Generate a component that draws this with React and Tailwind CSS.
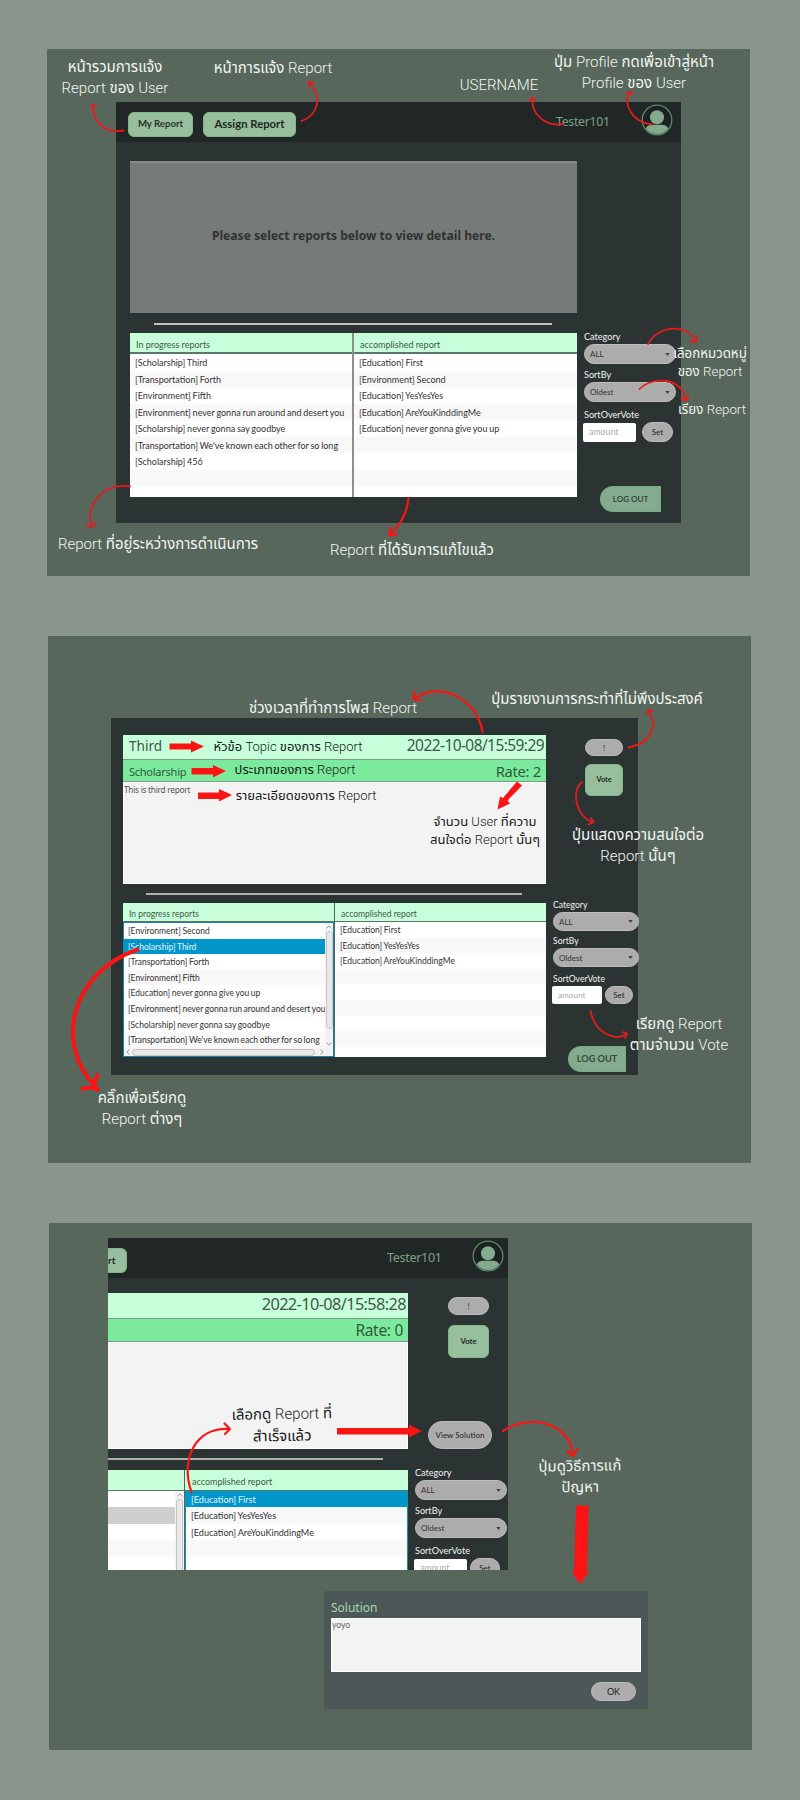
import React from 'react';

const thai = "font-['Roboto','Noto_Sans_Thai','Noto_Sans',sans-serif]";

function ActionButton({ className, children }) {
  return (
    <button className={`flex shrink-0 items-center justify-center whitespace-nowrap font-['Lato',sans-serif] ${className}`}>
      {children}
    </button>
  );
}

function Avatar({ className }) {
  return (
    <svg viewBox="0 0 32 32" className={`h-8 w-8 shrink-0 ${className}`}>
      <circle cx="16" cy="16" r="14.8" fill="#1c2121" stroke="#5f8a6c" strokeWidth="1.3" />
      <circle cx="16" cy="13.2" r="7" fill="#84ab8d" />
      <path d="M4.7 24.2 Q7 20.8 11 20.8 H21 Q25 20.8 27.3 24.2 A14 14 0 0 1 4.7 24.2Z" fill="#84ab8d" />
    </svg>
  );
}

function Select({ className, children }) {
  return (
    <div className={`flex shrink-0 items-center justify-between rounded-full border border-[#bcbcbc] bg-[#acacac] pr-[5px] pl-[5px] font-['Lato',sans-serif] text-[8px] text-[#333] ${className}`}>
      <span>{children}</span>
      <svg viewBox="0 0 6 4" className="h-[3px] w-[5px]"><path d="M0 0H6L3 4Z" fill="#444" /></svg>
    </div>
  );
}

function FieldLabel({ className, children }) {
  return (
    <div className={`flex shrink-0 items-end font-['Lato',sans-serif] leading-[14px] text-[#f0f3f1] ${className}`}>{children}</div>
  );
}

function Row({ className, children }) {
  return (
    <li className={`shrink-0 overflow-hidden whitespace-nowrap font-['Lato',sans-serif] [word-spacing:-0.55px] ${className}`}>{children}</li>
  );
}

const stripe = ['bg-white', 'bg-[#f8f8f8]'];

function Filters({ small, clipped }) {
  const sel = small ? 'h-[19px] w-[86px]' : 'h-5 w-[92px]';
  const label = small ? 'text-[8.6px]' : 'text-[9.1px]';
  return (
    <div className="flex flex-col">
      <FieldLabel className={`h-[14px] pl-px ${label}`}>Category</FieldLabel>
      <Select className={`ml-px ${sel}`}>ALL</Select>
      <FieldLabel className={`${small ? 'h-[17px]' : 'h-[18px]'} pl-px ${label}`}>SortBy</FieldLabel>
      <Select className={`ml-px ${sel}`}>Oldest</Select>
      <FieldLabel className={`${small ? 'h-[19px]' : 'h-[20px]'} pl-px ${label}`}>SortOverVote</FieldLabel>
      <div className="flex items-center">
        <div className={`flex items-center rounded-[2px] bg-white pl-[6px] font-['Lato',sans-serif] text-[#aaa] ${small ? 'h-[18px] w-[50px] text-[8.2px]' : 'h-[19px] w-[53px] text-[8.8px]'}`}>amount</div>
        <ActionButton className={`rounded-full border border-[#bcbcbc] bg-[#acacac] text-[8px] text-[#222] ${small ? 'ml-[3px] h-[18px] w-[28px]' : clipped ? 'ml-[3px] h-5 w-[30px]' : 'ml-[6px] h-5 w-[31px]'}`}>Set</ActionButton>
      </div>
    </div>
  );
}

function ReportsWindow() {
  const left = ['[Scholarship] Third', '[Transportation] Forth', '[Environment] Fifth', '[Environment] never gonna run around and desert you', '[Scholarship] never gonna say goodbye', "[Transportation] We've known each other for so long", '[Scholarship] 456', '', ''];
  const right = ['[Education] First', '[Environment] Second', '[Education] YesYesYes', '[Education] AreYouKinddingMe', '[Education] never gonna give you up', '', '', '', ''];
  return (
    <div className="flex h-[421px] w-[565px] flex-col bg-[#2c3433]">
      <header className="flex h-[40px] shrink-0 items-center bg-[#212626] pl-3">
        <ActionButton className="mt-[4px] h-[25px] w-[65px] rounded-[6px] border border-[#83b78b] bg-[#98bf9d] text-[9.6px] font-bold text-[#24352a]">My Report</ActionButton>
        <ActionButton className="mt-[4px] ml-[10px] h-[25px] w-[93px] rounded-[6px] border border-[#83b78b] bg-[#98bf9d] text-[11.3px] font-bold text-[#1c2a1f]">Assign Report</ActionButton>
        <span className="ml-auto w-[55px] font-['Noto_Sans',sans-serif] text-[12.3px] tracking-[-0.3px] whitespace-nowrap text-[#7ba286]">Tester101</span>
        <Avatar className="mr-[8px] ml-[30px] -mt-[5px]" />
      </header>
      <div className="flex pl-[14px]">
        <main className="flex w-[447px] flex-col pt-[19px]">
          <div className="flex h-[152px] items-center justify-center border-t-2 border-[#868a89] bg-[#767a79] font-['Noto_Sans',sans-serif] text-[12.1px] font-bold text-[#303232]">
            <span className="-mt-[4px] whitespace-nowrap">Please select reports below to view detail here.</span>
          </div>
          <div className="mt-[10px] ml-[24px] h-[2px] w-[398px] bg-[#bfc2c1]" />
          <div className="mt-[8px] flex h-[164px] overflow-hidden bg-[#8c8f8e]">
            <ListColumn title="In progress reports" rows={left} className="w-[222px]" />
            <ListColumn title="accomplished report" rows={right} className="ml-[2px] w-[223px]" />
          </div>
        </main>
        <aside className="flex flex-col pt-[188px] pl-[6px]">
          <Filters />
          <ActionButton className="mt-[44px] ml-[17px] h-[26px] w-[61px] rounded-l-full rounded-r-[3px] border border-[#75ab81] bg-[#84ab8d] text-[8px] font-bold text-[#34493b]">LOG OUT</ActionButton>
        </aside>
      </div>
    </div>
  );
}

function ListColumn({ title, rows, className }) {
  return (
    <section className={`flex shrink-0 flex-col bg-white ${className}`}>
      <h3 className="flex h-[21px] shrink-0 items-center border-b-2 border-[#5d7667] bg-[#c8ffdb] pt-[4px] pl-[6px] font-['Lato',sans-serif] text-[9px] text-[#3d5a49]">{title}</h3>
      <ul className="flex flex-col">
        {rows.map((r, i) => (
          <Row key={i} className={`h-[16.5px] pl-[5px] text-[9px] leading-[17.5px] text-[#333] ${stripe[i % 2]}`}>{r}</Row>
        ))}
      </ul>
    </section>
  );
}

function Chevron({ className }) {
  return (
    <svg viewBox="0 0 6 4" className={`h-[4px] w-[6px] shrink-0 ${className}`}>
      <path d="M0.5 3.4L3 0.8L5.5 3.4" fill="none" stroke="#999" strokeWidth="1" />
    </svg>
  );
}

function DetailWindow() {
  const left = ['[Environment] Second', '[Scholarship] Third', '[Transportation] Forth', '[Environment] Fifth', '[Education] never gonna give you up', '[Environment] never gonna run around and desert you', '[Scholarship] never gonna say goodbye', '[Transportation] We\'ve known each other for so long'];
  const right = ['[Education] First', '[Education] YesYesYes', '[Education] AreYouKinddingMe', '', '', '', '', '', ''];
  return (
    <div className="flex h-[357px] w-[527px] overflow-visible bg-[#2c3433] pl-[12px]">
      <main className="flex w-[423px] shrink-0 flex-col pt-[17px] font-['Noto_Sans',sans-serif]">
        <div className="flex h-[25px] justify-between border-b border-[#7d9b88] bg-[#c8ffdb] pr-[2px] pl-[6px] leading-[21px] text-[#3f5748]">
          <span className="text-[13.6px]">Third</span>
          <span className="text-[15.5px] tracking-[-0.58px]">2022-10-08/15:59:29</span>
        </div>
        <div className="flex h-[22px] justify-between border-b border-[#7d9b88] bg-[#7cea9c] pr-[5px] pl-[6px] text-[#2f5a3d]">
          <span className="text-[11px] leading-[23px] tracking-[-0.25px]">Scholarship</span>
          <span className="text-[14.8px] leading-[22px] tracking-[-0.3px]">Rate: 2</span>
        </div>
        <div className="h-[102px] border border-white bg-[#f3f3f3] text-[8.3px] leading-[13px] tracking-[-0.27px] text-[#555]">This is third report</div>
        <div className="mt-[9px] ml-[23px] h-[2px] w-[376px] shrink-0 bg-[#aeb1b0]" />
        <div className="mt-[8px] flex h-[154px] shrink-0 bg-[#5b6360]">
          <section className="flex w-[211px] flex-col">
            <h3 className="flex h-[19px] shrink-0 items-center border-b border-[#5d7667] bg-[#c8ffdb] pt-[4px] pl-[6px] font-['Lato',sans-serif] text-[8.5px] text-[#3d5a49]">In progress reports</h3>
            <div className="flex flex-1 flex-col border border-[#1784ab] bg-[#f2f2f2]">
              <div className="flex h-[125px] shrink-0">
                <ul className="flex w-[201px] flex-col overflow-hidden">
                  {left.map((r, i) => (
                    <Row key={i} className={`h-[15.6px] pl-[4px] text-[8.5px] leading-[16px] ${i === 1 ? 'bg-[#0096c9] text-[#e2f3f9]' : `text-[#333] ${stripe[i % 2]}`}`}>{r}</Row>
                  ))}
                </ul>
                <div className="flex flex-1 flex-col items-center pt-[2px] pb-[2px]">
                  <Chevron />
                  <div className="mt-[2px] h-[98px] w-[7px] rounded-full border border-[#c4c4c4] bg-[#e8e8e8]" />
                  <Chevron className="mt-auto rotate-180" />
                </div>
              </div>
              <div className="flex flex-1 items-center pl-px">
                <Chevron className="-rotate-90" />
                <div className="ml-px h-[7px] w-[183px] rounded-full border border-[#c4c4c4] bg-[#e8e8e8]" />
                <Chevron className="ml-[4px] rotate-90" />
              </div>
            </div>
          </section>
          <section className="ml-px flex w-[211px] flex-col overflow-hidden bg-white">
            <h3 className="flex h-[19px] shrink-0 items-center border-b border-[#5d7667] bg-[#c8ffdb] pt-[4px] pl-[6px] font-['Lato',sans-serif] text-[8.5px] text-[#3d5a49]">accomplished report</h3>
            <ul className="flex flex-col">
              {right.map((r, i) => (
                <Row key={i} className={`h-[15.6px] pl-[5px] text-[8.5px] leading-[16.6px] text-[#333] ${stripe[i % 2]}`}>{r}</Row>
              ))}
            </ul>
          </section>
        </div>
      </main>
      <aside className="flex shrink-0 flex-col pt-[21px] pl-[6px]">
        <ActionButton className="ml-[33px] h-[17px] w-[38px] rounded-full border border-[#bcbcbc] bg-[#acacac] text-[8px] text-[#333]">!</ActionButton>
        <ActionButton className="mt-[8px] ml-[33px] h-[32px] w-[38px] rounded-[6px] border border-[#83b78b] bg-[#98bf9d] text-[7.3px] font-bold text-[#1c2a1f]">Vote</ActionButton>
        <div className="mt-[102px]"><Filters small /></div>
        <ActionButton className="mt-[42px] ml-[16px] h-[26px] w-[58px] rounded-l-full rounded-r-[3px] border border-[#75ab81] bg-[#84ab8d] text-[9.2px] font-bold text-[#34493b]">LOG OUT</ActionButton>
      </aside>
    </div>
  );
}

function SolvedWindow() {
  const right = ['[Education] First', '[Education] YesYesYes', '[Education] AreYouKinddingMe', '', ''];
  return (
    <div className="flex h-[332px] w-[400px] flex-col overflow-hidden bg-[#2c3433]">
      <header className="flex h-[40px] shrink-0 items-center bg-[#212626]">
        <ActionButton className="mt-[5px] h-[25px] w-[19px] justify-start! rounded-r-[6px] border border-l-0 border-[#83b78b] bg-[#98bf9d] text-[10px] font-bold text-[#1c2a1f]">rt</ActionButton>
        <span className="ml-auto w-[56px] font-['Noto_Sans',sans-serif] text-[12.5px] tracking-[-0.3px] whitespace-nowrap text-[#7ba286]">Tester101</span>
        <Avatar className="mr-[4px] ml-[29px] -mt-[4px]" />
      </header>
      <div className="flex">
        <main className="flex w-[300px] shrink-0 flex-col pt-[15px] font-['Noto_Sans',sans-serif]">
          <div className="flex h-[26px] justify-end border-b border-[#7d9b88] bg-[#c8ffdb] pr-[2px] text-[16.3px] leading-[23px] tracking-[-0.6px] text-[#3f5748]">2022-10-08/15:58:28</div>
          <div className="flex h-[23px] justify-end border-b border-[#7d9b88] bg-[#7cea9c] pr-[5px] text-[15.5px] leading-[23px] tracking-[-0.3px] text-[#2f5a3d]">Rate: 0</div>
          <div className="h-[107px] border border-l-0 border-white bg-[#f3f3f3]" />
          <div className="mt-[9px] h-[2px] w-[275px] shrink-0 bg-[#aeb1b0]" />
          <div className="mt-[10px] flex h-[100px] shrink-0 bg-[#5b6360]">
            <section className="flex w-[76px] flex-col bg-white">
              <div className="h-[21px] shrink-0 border-b border-[#5d7667] bg-[#c8ffdb]" />
              <div className="flex flex-1">
                <ul className="flex w-[67px] flex-col">
                  {['bg-white', 'bg-[#cfcfcf]', 'bg-white', 'bg-[#f8f8f8]', 'bg-white'].map((c, i) => <Row key={i} className={`h-[16.4px] ${c}`} />)}
                </ul>
                <div className="flex flex-1 flex-col items-center bg-[#f2f2f2] pt-[2px]">
                  <Chevron />
                  <div className="mt-[2px] w-[7px] flex-1 rounded-t-full border border-b-0 border-[#c4c4c4] bg-[#e8e8e8]" />
                </div>
              </div>
            </section>
            <section className="ml-px flex w-[223px] flex-col bg-white">
              <h3 className="flex h-[21px] shrink-0 items-center border-b border-[#5d7667] bg-[#c8ffdb] pt-[4px] pl-[7px] font-['Lato',sans-serif] text-[9px] text-[#3d5a49]">accomplished report</h3>
              <ul className="flex flex-1 flex-col border-x border-[#1590bd]">
                {right.map((r, i) => (
                  <Row key={i} className={`h-[16.4px] pl-[5px] text-[9.1px] leading-[17px] ${i === 0 ? 'bg-[#0096c9] text-[#e2f3f9]' : `text-[#333] ${stripe[i % 2]}`}`}>{r}</Row>
                ))}
              </ul>
            </section>
          </div>
        </main>
        <aside className="flex shrink-0 flex-col pt-[19px] pl-[6px]">
          <ActionButton className="ml-[34px] h-[18px] w-[41px] rounded-full border border-[#bcbcbc] bg-[#acacac] text-[8px] text-[#333]">!</ActionButton>
          <ActionButton className="mt-[10px] ml-[34px] h-[33px] w-[41px] rounded-[6px] border border-[#83b78b] bg-[#98bf9d] text-[7.8px] font-bold text-[#1c2a1f]">Vote</ActionButton>
          <ActionButton className="mt-[63px] ml-[14px] h-[28px] w-[64px] rounded-full border border-[#bcbcbc] bg-[#acacac] text-[8px] text-[#222]">View Solution</ActionButton>
          <div className="mt-[17px]"><Filters clipped /></div>
        </aside>
      </div>
    </div>
  );
}

function SolutionDialog() {
  return (
    <div className="flex h-[118px] w-[324px] flex-col bg-[#4c5757] px-[7px] pt-[8px]">
      <h2 className="h-[19px] font-['Noto_Sans',sans-serif] text-[12px] leading-[18px] text-[#a8d8b4]">Solution</h2>
      <div className="h-[54px] border border-white bg-[#f3f3f3] font-['Lato',sans-serif] text-[8.6px] leading-[12px] text-[#666]">yoyo</div>
      <ActionButton className="mt-[10px] mr-[5px] h-[19px] w-[45px] self-end rounded-full border border-[#bcbcbc] bg-[#acacac] text-[9px] text-[#222]">OK</ActionButton>
    </div>
  );
}

function Note({ className, children }) {
  return (
    <p className={`absolute -translate-x-1/2 -translate-y-1/2 text-center whitespace-nowrap ${thai} ${className}`}>
      {React.Children.map(children, (child) =>
        typeof child === 'string'
          ? child.split(/([A-Za-z]+)/).map((part, i) => (i % 2 ? <span key={i} className="font-light">{part}</span> : part))
          : child
      )}
    </p>
  );
}

function Arrows() {
  return (
    <svg viewBox="0 0 800 1800" className="pointer-events-none absolute top-0 left-0 h-[1800px] w-[800px]">
      <g fill="none" stroke="#e51c1c" strokeWidth="1.8" strokeLinecap="round" strokeLinejoin="round">
        <path d="M123.500 130.500C106 134 92 122 93 105.500M90.500 108L93.500 105L96.500 106.500" />
        <path d="M301.500 121C319 115 322 96 309.500 83M309 86.500L308.500 82L313 82.500" />
        <path d="M563 124C545 127 531 114 532.500 98M529.500 100.500L533 97.500L535.500 100.500" />
        <path d="M652 124.500C632 122 623 105 629.500 92M627 93.500L630.500 91.500L632.500 95" />
        <path d="M648 344C658 325 688 323 695.500 341M690.500 341L696 342L697 336.500" />
        <path d="M639.500 389C652 376 683 377 685.500 400M681 398.500L685.500 401L688.500 396" />
        <path d="M130 486.500C103 482 85 505 91.500 526M86.500 525L92 527.500L95 522.500" />
        <path d="M628.500 747.500C652 743 658 725 648.500 710.500M647 714L647.500 710.500L652.500 710.500" />
        <path d="M582 782C570 792 577 818 593 822M588.500 824.500L593.500 822L591 818" />
        <path d="M590.500 1011C595 1034 615 1041 626 1034.500M622.500 1032L627 1033.500L625 1038" />
      </g>
      <g fill="none" stroke="#fb1414" strokeWidth="2.200" strokeLinecap="round" strokeLinejoin="round">
        <path d="M408.500 498C407 515 398 528 389 535M391 527.500L389 536L397 534" />
        <path d="M482.500 732C477 698 439 680 414 699M414.500 691.500L413.500 699.500L421.500 700.500" />
        <path d="M191.500 1492C180 1460 195 1427 229 1429M224.500 1423.500L230 1429L225 1434" />
        <path d="M503 1431C525 1415 568 1419 573 1454M567 1451.500L573 1456L577.500 1449" />
      </g>
      <path d="M139 949C70 972 54 1045 96 1087M98.500 1074Q91 1084 98 1089.500Q90 1086 81 1089.500" fill="none" stroke="#fb1414" strokeWidth="4" strokeLinejoin="round" />
      <g fill="#fb1414">
        <path d="M169.500 743.500H191V740.500L204 746.500L191 752.500V749.500H169.500Z" />
        <path d="M191.500 768H213V765L226 771L213 777.500V774.500H191.500Z" />
        <path d="M198 792.500H219V789L232 795L219 801.500V799H198Z" />
        <path d="M517 781.500L522 785.500L507.500 800.500L510 803.500L497.500 809.500L500 796.500L503 798Z" />
        <path d="M337 1428H409V1424.500L421.500 1431L409 1437.500V1434.500H337Z" />
        <path d="M576 1505.500H588.500L587 1571.500H589.500L580 1584L571.500 1571.500H574Z" />
      </g>
    </svg>
  );
}

export default function App() {
  return (
    <div className="relative flex h-[1800px] w-[800px] flex-col gap-[60px] overflow-hidden bg-[#8a958c] pt-[49px]">
      <section className="ml-[47px] h-[527px] w-[703px] shrink-0 bg-[#57675b] pt-[53px] pl-[69px]"><ReportsWindow /></section>
      <section className="ml-[48px] h-[527px] w-[703px] shrink-0 bg-[#57675b] pt-[82px] pl-[63px]"><DetailWindow /></section>
      <section className="ml-[49px] flex h-[527px] w-[703px] shrink-0 flex-col bg-[#57675b] pt-[15px] pl-[59px]">
        <SolvedWindow />
        <div className="mt-[21px] ml-[216px]"><SolutionDialog /></div>
      </section>

      <div className="text-[15px] leading-[21px] text-[#f3f5f3]">
        <Note className="top-[78px] left-[115px]">หน้ารวมการแจ้ง<br />Report ของ User</Note>
        <Note className="top-[68px] left-[273px]">หน้าการแจ้ง Report</Note>
        <Note className="top-[85px] left-[499px]">USERNAME</Note>
        <Note className="top-[73px] left-[634px]">ปุ่ม Profile กดเพื่อเข้าสู่หน้า<br />Profile ของ User</Note>
        <Note className="top-[363px] left-[710px] text-[13.3px] leading-[18px]">เลือกหมวดหมู่<br />ของ Report</Note>
        <Note className="top-[409px] left-[712px] text-[13.3px]">เรียง Report</Note>
        <Note className="top-[544px] left-[158px]">Report ที่อยู่ระหว่างการดำเนินการ</Note>
        <Note className="top-[550px] left-[412px]">Report ที่ได้รับการแก้ไขแล้ว</Note>
        <Note className="top-[708px] left-[333px]">ช่วงเวลาที่ทำการโพส Report</Note>
        <Note className="top-[699px] left-[597px]">ปุ่มรายงานการกระทำที่ไม่พึงประสงค์</Note>
        <Note className="top-[846px] left-[638px]">ปุ่มแสดงความสนใจต่อ<br />Report นั้นๆ</Note>
        <Note className="top-[1035px] left-[679px]">เรียกดู Report<br />ตามจำนวน Vote</Note>
        <Note className="top-[1109px] left-[142px]">คลิ๊กเพื่อเรียกดู<br />Report ต่างๆ</Note>
        <Note className="top-[1477px] left-[580px] -rotate-1">ปุ่มดูวิธีการแก้<br />ปัญหา</Note>
      </div>
      <div className="text-[13px] leading-[18px] text-[#151a17]">
        <Note className="top-[747px] left-[288px]">หัวข้อ Topic ของการ Report</Note>
        <Note className="top-[770px] left-[295px]">ประเภทของการ Report</Note>
        <Note className="top-[796px] left-[306px]">รายละเอียดของการ Report</Note>
        <Note className="top-[831px] left-[485px]">จำนวน User ที่ความ<br />สนใจต่อ Report นั้นๆ</Note>
        <Note className="top-[1425px] left-[282px] -rotate-1 text-[15px] leading-[22px]">เลือกดู Report ที่<br />สำเร็จแล้ว</Note>
      </div>
      <Arrows />
    </div>
  );
}
